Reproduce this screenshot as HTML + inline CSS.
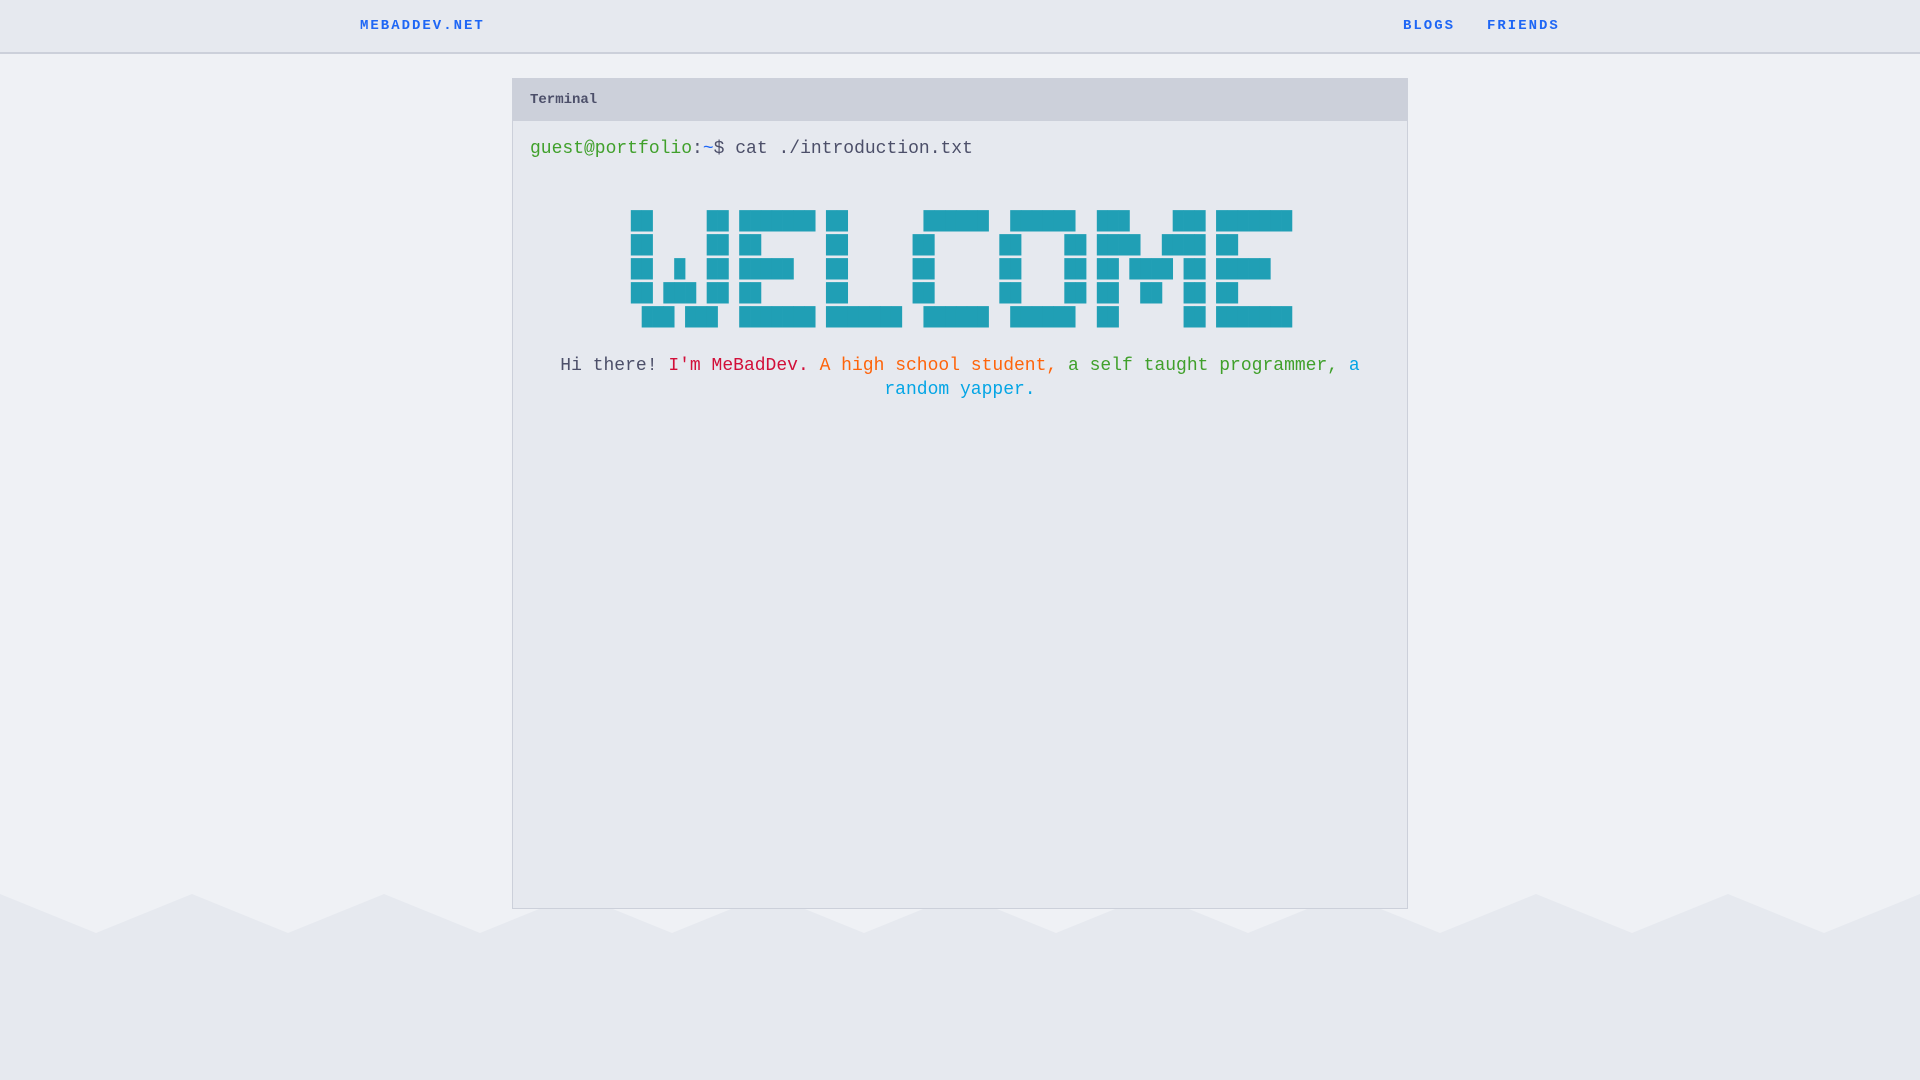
<!DOCTYPE html>
<html><head><meta charset="utf-8"><style>
html,body{margin:0;padding:0}
body{width:1920px;height:1080px;background:#eff1f5;position:relative;overflow:hidden;font-family:"Liberation Mono","DejaVu Sans Mono",monospace;color:#4c4f69}
.hdr{position:absolute;left:0;top:0;width:1920px;height:52px;background:#e6e9ef;border-bottom:2px solid #ccd0da}
.hdr a{position:absolute;top:17px;font-weight:bold;font-size:14px;letter-spacing:2px;color:#1e66f5;text-decoration:none;line-height:18px}
svg.m{position:absolute;left:0;top:0}
.term{position:absolute;left:512px;top:78px;width:894px;height:829px;background:#e6e9ef;border:1px solid #ccd0da}
.tb{height:42px;background:#ccd0da;font-size:14px;font-weight:bold;line-height:42px;padding-left:17px;color:#4c4f69}
.body{padding:16px 17px;font-size:18px;line-height:24px}
pre{margin:49px 0 0;position:relative;left:7px;font-family:"DejaVu Sans Mono",monospace;font-size:18px;line-height:24px;color:#209fb5;text-align:center}
.intro{text-align:center;margin-top:24px;padding:0 30px}
</style></head><body>
<svg class="m" width="1920" height="1080"><polygon fill="#e6e9ef" points="0,894 96,933 192,894 288,933 384,894 480,933 576,894 672,933 768,894 864,933 960,894 1056,933 1152,894 1248,933 1344,894 1440,933 1536,894 1632,933 1728,894 1824,933 1920,894 1920,1080 0,1080"/></svg>
<div class="hdr"><a style="left:360px">MEBADDEV.NET</a><a style="left:1403px">BLOGS</a><a style="left:1487px">FRIENDS</a></div>
<div class="term"><div class="tb">Terminal</div><div class="body"><span style="color:#40a02b">guest@portfolio</span>:<span style="color:#1e66f5">~</span>$ cat ./introduction.txt
<pre>██     ██ ███████ ██       ██████  ██████  ███    ███ ███████ 
██     ██ ██      ██      ██      ██    ██ ████  ████ ██      
██  █  ██ █████   ██      ██      ██    ██ ██ ████ ██ █████   
██ ███ ██ ██      ██      ██      ██    ██ ██  ██  ██ ██      
 ███ ███  ███████ ███████  ██████  ██████  ██      ██ ███████ </pre>
<div class="intro">Hi there! <span style="color:#d20f39">I'm MeBadDev.</span> <span style="color:#fe640b">A high school student,</span> <span style="color:#40a02b">a self taught programmer,</span> <span style="color:#04a5e5">a random yapper.</span></div>
</div></div>
</body></html>
